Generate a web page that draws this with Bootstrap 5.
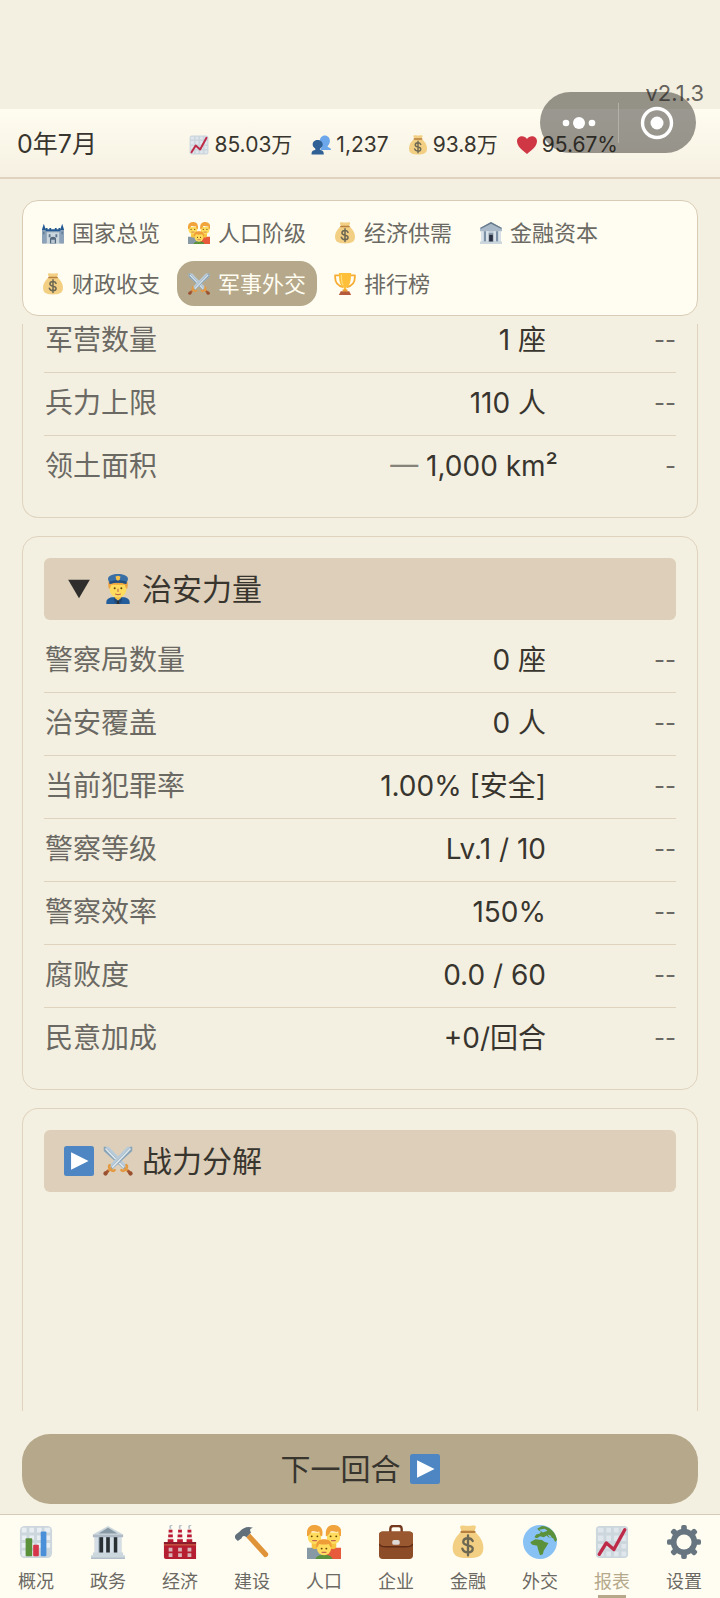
<!DOCTYPE html>
<html lang="zh-CN">
<head>
<meta charset="utf-8">
<meta name="viewport" content="width=device-width, initial-scale=1">
<title>军事外交 - 报表</title>
<link href="https://cdn.jsdelivr.net/npm/bootstrap@5.3.0/dist/css/bootstrap.min.css" rel="stylesheet">
<style>
:root { --paper:#f4f0e1; --cream:#fffdf1; --line:#dfd3bf; --tan:#b5a88b; --sand:#ddcfb9; --ink:#38352f; --dim:#6b6963; }
body { background:var(--paper); color:var(--ink); font-family:Inter,"Noto Sans CJK SC",sans-serif; }
.app { min-height:100vh; }
.ico { flex:none; display:block; }
.status-space { height:109px; }
.version { top:80px; right:16px; font-size:22px; line-height:26px; color:#66635d; }
.capsule { top:92px; right:24px; width:156px; height:61px; border-radius:31px; background:rgba(30,28,26,.45); z-index:3; }
.capsule button { background:none; border:0; padding:0; flex:1; display:flex; align-items:center; justify-content:center; }
.capsule .split { width:1px; height:40px; background:#b3b0aa; }
.topbar { height:70px; padding:3px 102px 0 17px; background:linear-gradient(#fffdf0,#f5f0e2); border-bottom:2px solid var(--line); }
.date { font-size:25px; }
.stats { gap:19px; font-size:21px; }
.stats .ico { width:20px; height:20px; margin-right:5px; }
.main-area { padding:0 22px; }
.tabs { margin-top:21px; padding:9px 8px; border:1px solid #d8ccb7; border-radius:16px; background:var(--cream); gap:6px; }
.tab { height:45px; padding:0 11px; gap:8px; border:0; border-radius:17px; background:none; color:var(--dim); font-size:22px; line-height:32px; }
.tab .ico { width:22px; height:22px; }
.tab.active { background:var(--tan); color:var(--cream); }
.scroll { flex:1 1 0; margin-top:8px; overflow:hidden; gap:18px; }
.panel { padding:21px 21px 19px; border:1px solid var(--line); border-radius:16px; }
.panel.cut-top { border-top:0; border-radius:0 0 16px 16px; padding-top:0; }
.panel.cut-bottom { border-bottom:0; border-radius:16px 16px 0 0; flex:1; }
.panel h2 { margin:0; }
.fold { width:100%; height:62px; padding:0 20px; gap:9px; border:0; border-radius:6px; background:var(--sand); color:var(--ink); font-size:30px; line-height:40px; }
.fold .ico { width:30px; height:30px; }
.data { width:100%; margin:0; table-layout:fixed; font-size:28px; line-height:40px; }
.fold-gap { margin-top:9px; }
.data th, .data td { height:63px; padding:0 0 1px; border-bottom:1px solid var(--line); font-weight:400; vertical-align:middle; white-space:nowrap; }
.data tr:last-child > * { border-bottom:0; }
.data th { color:var(--dim); padding-left:1px; }
.data td { text-align:right; }
.data .delta { width:130px; color:var(--dim); font-size:24px; }
.data .dash { color:#85827a; }
.data.scrolled tr:first-child > * { height:48px; padding-bottom:15px; line-height:32px; }
.area-value { margin-right:-12px; }
.next { margin-top:23px; height:70px; border:0; border-radius:28px; background:var(--tan); color:var(--ink); font-size:30px; gap:9px; }
.next .ico { width:30px; height:30px; }
.bottom { margin-top:10px; height:84px; border-top:1px solid #d5cbb6; background:var(--cream); }
.bottom a { flex:1 1 0; padding-top:10px; color:var(--dim); font-size:18px; line-height:26px; text-decoration:none; position:relative; gap:10px; }
.bottom .ico { width:34px; height:34px; }
.bottom a.active { color:var(--tan); }
.bottom a.active::after { content:""; position:absolute; bottom:0; width:28px; height:3px; background:var(--tan); }
</style>
<script src="https://cdn.jsdelivr.net/npm/bootstrap@5.3.0/dist/js/bootstrap.bundle.min.js"></script>
</head>
<body>
<svg width="0" height="0" class="d-none" aria-hidden="true">
  <symbol id="i-chart" viewBox="0 0 36 36">
    <rect x="1" y="1" width="34" height="34" rx="4" fill="#ccd6dd"/>
    <g fill="#e1e8ed"><path d="M3 3h6v5H3zM12 3h5v5h-5zM20 3h5v5h-5zM28 3h5v5h-5zM3 11h6v6H3zM12 11h5v6h-5zM20 11h5v6h-5zM28 11h5v6h-5zM3 20h6v5H3zM12 20h5v5h-5zM20 20h5v5h-5zM28 20h5v5h-5zM3 28h6v5H3zM12 28h5v5h-5zM20 28h5v5h-5zM28 28h5v5h-5z" opacity=".9"/></g>
    <path d="M4.500 31 12 19l8 7L31.500 5" fill="none" stroke="#be2b48" stroke-width="3.600" stroke-linecap="round" stroke-linejoin="round"/>
  </symbol>
  <symbol id="i-bars" viewBox="0 0 36 36">
    <rect x="1" y="1" width="34" height="34" rx="5" fill="#ccd6dd"/>
    <path d="M3 3h5v5H3zM11 3h5v5h-5zM19 3h5v5h-5zM27 3h6v5h-6zM3 11h5v5H3zM11 11h5v5h-5zM19 11h5v5h-5zM27 11h6v5h-6zM3 19h5v5H3zM11 19h5v5h-5zM19 19h5v5h-5zM27 19h6v5h-6zM3 27h5v6H3zM11 27h5v6h-5z" fill="#e9eef3"/>
    <rect x="7" y="14" width="7" height="19" rx="1" fill="#5c913b"/><rect x="15" y="21" width="6" height="12" rx="1" fill="#d7354a"/><rect x="23" y="7" width="6" height="26" rx="1" fill="#4a90d9"/>
  </symbol>
  <symbol id="i-people" viewBox="0 0 36 36">
    <path d="M17 27c0-3 2-5 3-6-3-3-4-5-4-10 0-6 4-10 9-10s9 4 9 10c0 4-2 7-4 9-1 3 6 2 6 7z" fill="#6ba7ea"/>
    <path d="M1 35c0-6 2-7 6-8 2-1 1-2 0-3-3-3-4-4-4-7 0-5 4-8 9-8s9 3 9 8c0 3-1 4-4 7-1 1-2 2 0 3 4 1 6 2 6 8z" fill="#2f6196"/>
  </symbol>
  <symbol id="i-money" viewBox="0 0 36 36">
    <path d="M11 7C3 14 1 21 2 27c1 6 6 8 16 8s15-2 16-8c1-6-1-13-9-20z" fill="#f2cf83"/>
    <path d="M10 1c3-1 4 0 8 0s6-1 8 0c1 2-1 5-2 6H12c-1-1-3-4-2-6z" fill="#f2cf83"/>
    <rect x="10" y="6" width="16" height="2.500" rx="1.200" fill="#b8803f"/>
    <path d="M23 17c-1-2-3-3-5-3-3 0-5 1-5 4 0 5 10 2 10 7 0 3-2 4-5 4s-5-1-6-4M18 11v21" fill="none" stroke="#6d6853" stroke-width="2.500" stroke-linecap="round"/>
  </symbol>
  <symbol id="i-heart" viewBox="0 0 36 36"><path d="M18 34C8 27 0 20 0 11 0 1 13-1 18 7c5-8 18-6 18 4 0 9-8 16-18 23z" fill="#cf3745"/></symbol>
  <symbol id="i-castle" viewBox="0 0 36 36">
    <path d="M1 14h34v21H1z" fill="#9aaebe"/><path d="M8 17h20v18H8z" fill="#ccd6dd"/>
    <path d="M0 35V11h7v24zM29 35V11h7v24z" fill="#8ba2b8"/>
    <path d="M0 13 1 9l2-6 2 6 1 4zM30 13l1-4 2-6 2 6 1 4zM6 15v-5h3v2h3v-2h3v2h6v-2h3v2h3v-2h3v5z" fill="#245a91"/>
    <path d="M11 20h3v5h-3zM22 20h3v5h-3zM2 16h2v4H2zM32 16h2v4h-2z" fill="#5c7690"/>
    <path d="M13 35v-7c0-5 10-5 10 0v7z" fill="#53687c"/><path d="M15 35v-6h6v6z" fill="#b9c7d2"/>
  </symbol>
  <symbol id="i-family" viewBox="0 0 36 36">
    <path d="M0 36V24h12c3 1 4 3 4 5v7z" fill="#8899a6"/><path d="M36 36V24H24c-3 1-4 3-4 5v7z" fill="#e75a3b"/>
    <path d="M9 36c1-6 17-6 18 0z" fill="#5c913b"/>
    <path d="M5 17h7v7c-2 2-5 2-7 0zM24 17h7v7c-2 2-5 2-7 0z" fill="#f6c43f"/>
    <path d="M1 8h14v6c0 3-3 6-7 6s-7-3-7-6zM21 8h14v6c0 3-3 6-7 6s-7-3-7-6z" fill="#ffdc5d"/>
    <path d="M0 12C-1 3 3 0 8 0s10 3 8 12l-2-1-1-4c-3 1-6-1-8 0-1 2-2 3-3 4zM20 12c-1-9 3-12 8-12s10 3 8 12l-2-1-1-4c-3 1-6-1-8 0-1 2-2 3-3 4z" fill="#f0a43b"/>
    <circle cx="18" cy="24.500" r="7.500" fill="#ffdc5d"/><path d="M10 24c-1-7 3-9 8-9s9 2 8 9c-2-1-2-3-3-4-3 1-7 1-10 0-1 1-1 3-3 4z" fill="#ef9d37"/>
    <g fill="#664500"><circle cx="5" cy="12" r="1"/><circle cx="11" cy="12" r="1"/><circle cx="25" cy="12" r="1"/><circle cx="31" cy="12" r="1"/><circle cx="15.500" cy="25" r="1"/><circle cx="20.500" cy="25" r="1"/></g>
    <path d="M6 16.500h4M26 16.500h4M16 29h4" stroke="#c1694f" stroke-width="1.200" stroke-linecap="round"/>
  </symbol>
  <symbol id="i-bank" viewBox="0 0 36 36">
    <path d="M2 10 18 1l16 9z" fill="#ccd6dd"/><path d="M8 9 18 3l10 6z" fill="#8899a6"/><path d="M2 10h32v3H2z" fill="#aebbc6"/>
    <path d="M4 13h28v17H4z" fill="#8899a6"/>
    <path d="M9 13h4v17H9zM16 13h4v17h-4zM24 13h4v17h-4z" fill="#292f33"/>
    <path d="M4 13h4v17H4zM13 13h3v17h-3zM20 13h4v17h-4zM28 13h4v17h-4z" fill="#d5dee6"/>
    <path d="M2 29h32v3h2v4H0v-4h2z" fill="#ccd6dd"/><path d="M0 34.500h36V36H0z" fill="#b2bfca"/>
  </symbol>
  <symbol id="i-museum" viewBox="0 0 36 36">
    <path d="M0 10 18 0l18 10v5H0z" fill="#a9b9c8"/><path d="M0 10 18 0l18 10-2 1L18 3 2 11z" fill="#677b8d"/>
    <path d="M2 15h32v18H2z" fill="#b9c7d4"/><path d="M6 15h4v17H6zM26 15h4v17h-4z" fill="#7d91a6"/><path d="M13 18h10v15H13z" fill="#8899a6"/><path d="M15 21h6v12h-6z" fill="#292f43"/>
    <path d="M2 15h4v17H2zM10 15h4v17h-4zM22 15h4v17h-4zM30 15h4v17h-4z" fill="#dae3ea"/><path d="M0 32h36v4H0z" fill="#ccd6dd"/>
  </symbol>
  <symbol id="i-swords" viewBox="0 0 36 36">
    <g id="sword"><path d="M1 1h6l22 23-4 4L1 6z" fill="#b9cbd8"/><path d="M1 1h2l24 25-2 2L1 6z" fill="#8aa3b5"/><path d="M3 3l22 23" stroke="#dde7ee" stroke-width="2"/>
    <path d="M22 29c2 2 4 0 5-1s3-3 1-5M27 27l6 6" fill="none" stroke="#e39a43" stroke-width="3" stroke-linecap="round"/><path d="M29.500 29.500l3 3" stroke="#a95836" stroke-width="3.500"/><circle cx="33" cy="33" r="2.600" fill="#99502f"/></g>
    <use href="#sword" transform="matrix(-1 0 0 1 36 0)"/>
  </symbol>
  <symbol id="i-trophy" viewBox="0 0 36 36">
    <path d="M10 4H2c-1 10 3 17 13 19M26 4h8c1 10-3 17-13 19" fill="none" stroke="#f5ad35" stroke-width="3"/>
    <path d="M8 0h20c0 13-2 22-8 24v7h-4v-7C10 22 8 13 8 0z" fill="#ffbf38"/><path d="M12 3c0 9 1 14 3 17" fill="none" stroke="#ffdc7b" stroke-width="2"/>
    <path d="M11 30h14l3 6H8z" fill="#b65a3c"/><path d="M14 27h8v3h-8z" fill="#e89c32"/>
  </symbol>
  <symbol id="i-police" viewBox="0 0 36 36">
    <path d="M4 36v-2c0-4 4-6 8-6h12c4 0 8 2 8 6v2z" fill="#245d9c"/><path d="M14 24h8v5l-4 3-4-3z" fill="#f5c04b"/>
    <path d="M13 28l5 4-4 3zM23 28l-5 4 4 3z" fill="#1e4777"/><path d="M17 32h2l1 4h-4z" fill="#292f33"/>
    <path d="M8 11h20v7c0 6-4 10-10 10S8 24 8 18z" fill="#ffdc5d"/><path d="M7 18c-1-5-1-7 0-9h22c1 2 1 4 0 9-2-1-2-3-3-5H10c-1 2-1 4-3 5z" fill="#efa43e"/>
    <path d="M6 6c0-4 6-6 12-6s12 2 12 6c0 2-2 4-2 6-6-2-14-2-20 0 0-2-2-4-2-6z" fill="#3a6fa5"/><path d="M8 9c6-2 14-2 20 0v3c-6-2-14-2-20 0z" fill="#24507f"/><path d="M18 2l3 1-1 4-2 1-2-1-1-4z" fill="#f5c04b"/>
    <circle cx="14" cy="17" r="1.200" fill="#664500"/><circle cx="22" cy="17" r="1.200" fill="#664500"/><path d="M15 24c2 1 4 1 6 0M18 18v3" fill="none" stroke="#c1694f" stroke-width="1.300" stroke-linecap="round"/>
  </symbol>
  <symbol id="i-play" viewBox="0 0 36 36"><rect width="36" height="36" rx="3" fill="#4d86c2"/><path d="M8.500 7.500v21L29.500 18z" fill="#fff"/></symbol>
  <symbol id="i-down" viewBox="0 0 36 36"><path d="M5 7h26L18 29z" fill="#2f2e2c"/></symbol>
  <symbol id="i-factory" viewBox="0 0 36 36">
    <path d="M6 4h4l1 15H5zM16 4h4l1 15h-6zM26 4h4l1 15h-6z" fill="#ece9e6"/><path d="M6 5h4v3H6zM5.600 10h4.800v3H5.500zM5 15h6v3H5zM16 5h4v3h-4zM15.600 10h4.800v3h-5zM15 15h6v3h-6zM26 5h4v3h-4zM25.600 10h4.800v3h-5zM25 15h6v3h-6z" fill="#be1931"/>
    <path d="M8 4c-1-3 0-4 2-4M18 4c-1-3 0-4 2-4M28 4c-1-3 0-4 2-4" fill="none" stroke="#b8c2ca" stroke-width="1.800"/>
    <path d="M1 18h34v18H3a2 2 0 0 1-2-2z" fill="#b51f31"/><path d="M1 18h34v3H1z" fill="#8c1c29"/><path d="M1 21h34" stroke="#db6a48"/>
    <path d="M6 24h4v4H6zM16 24h4v4h-4zM26 24h4v4h-4zM6 30h4v4H6zM16 30h4v4h-4zM26 30h4v4h-4z" fill="#d8b3b7"/>
  </symbol>
  <symbol id="i-hammer" viewBox="0 0 36 36">
    <path d="M12 13l4-4 19 21c1 2-2 5-4 4z" fill="#e0943a"/>
    <path d="M19 3C14 1 9 2 5 7l-4 3c-2 2-1 4 0 5l2 2 4-3c1-3 3-3 5-1l5-5c-2-3-1-4 2-5z" fill="#62707c"/>
  </symbol>
  <symbol id="i-case" viewBox="0 0 36 36">
    <path d="M12 8V4c0-2 1-3 3-3h6c2 0 3 1 3 3v4" fill="none" stroke="#74391e" stroke-width="2.500"/>
    <rect y="7" width="36" height="29" rx="4" fill="#8c4c27"/><path d="M0 20c2 3 4 3 8 3h20c4 0 6 0 8-3v-9a4 4 0 0 0-4-4H4a4 4 0 0 0-4 4z" fill="#9a5831"/><path d="M0 20c2 3 4 3 8 3h20c4 0 6 0 8-3" fill="none" stroke="#5f2b14" stroke-width="1.500"/><rect x="14" y="16" width="8" height="5" rx="2" fill="#ded8d5"/>
  </symbol>
  <symbol id="i-globe" viewBox="0 0 36 36">
    <circle cx="18" cy="18" r="18" fill="#88c1f4"/>
    <path d="M15 4l5-3c8 0 15 7 16 15l-2 2-2-4-5-1-2-2-3 2-4-1-3 2-3-1 2-3 4-1 1-2-2-1zM8 18l5-3 7 1 3 2 4 1-3 5-2 3-1 4-3 1-2-6-1-4-5-1-2-2z" fill="#5c913b"/><path d="M17 5l6-1 3 2-5 2zM26 10l3 1 2 3-3-1z" fill="#88c1f4"/>
  </symbol>
  <symbol id="i-gear" viewBox="0 0 36 36">
    <g fill="#66757f"><g id="teeth"><rect x="15" width="6" height="36" rx="2"/><rect y="15" width="36" height="6" rx="2"/></g><use href="#teeth" transform="rotate(45 18 18)"/></g>
    <circle cx="18" cy="18" r="11" fill="none" stroke="#66757f" stroke-width="6"/><circle cx="18" cy="18" r="8" fill="#fffdf1"/>
  </symbol>
</svg>

<div class="app d-flex flex-column position-relative">
  <div class="status-space"></div>
  <div class="version position-absolute">v2.1.3</div>
  <div class="capsule position-absolute d-flex align-items-center">
    <button type="button" aria-label="更多"><svg width="34" height="14" viewBox="0 0 34 14" fill="#fff"><circle cx="4" cy="7" r="3.300"/><circle cx="17" cy="7" r="6"/><circle cx="30" cy="7" r="3.300"/></svg></button>
    <span class="split"></span>
    <button type="button" aria-label="关闭"><svg width="34" height="34" viewBox="0 0 34 34"><circle cx="17" cy="17" r="14.500" fill="none" stroke="#fff" stroke-width="3.400"/><circle cx="17" cy="17" r="6.500" fill="#fff"/></svg></button>
  </div>

  <header class="topbar d-flex align-items-center justify-content-between">
    <div class="date">0年7月</div>
    <div class="stats d-flex align-items-center">
      <span class="d-flex align-items-center"><svg class="ico"><use href="#i-chart"/></svg>85.03万</span>
      <span class="d-flex align-items-center"><svg class="ico"><use href="#i-people"/></svg>1,237</span>
      <span class="d-flex align-items-center"><svg class="ico"><use href="#i-money"/></svg>93.8万</span>
      <span class="d-flex align-items-center"><svg class="ico"><use href="#i-heart"/></svg>95.67%</span>
    </div>
  </header>

  <main class="main-area flex-grow-1 d-flex flex-column">
    <div class="tabs d-flex flex-wrap">
      <button type="button" class="tab d-flex align-items-center"><svg class="ico"><use href="#i-castle"/></svg>国家总览</button>
      <button type="button" class="tab d-flex align-items-center"><svg class="ico"><use href="#i-family"/></svg>人口阶级</button>
      <button type="button" class="tab d-flex align-items-center"><svg class="ico"><use href="#i-money"/></svg>经济供需</button>
      <button type="button" class="tab d-flex align-items-center"><svg class="ico"><use href="#i-museum"/></svg>金融资本</button>
      <button type="button" class="tab d-flex align-items-center"><svg class="ico"><use href="#i-money"/></svg>财政收支</button>
      <button type="button" class="tab active d-flex align-items-center"><svg class="ico"><use href="#i-swords"/></svg>军事外交</button>
      <button type="button" class="tab d-flex align-items-center"><svg class="ico"><use href="#i-trophy"/></svg>排行榜</button>
    </div>

    <div class="scroll d-flex flex-column">
      <section class="panel cut-top">
        <table class="data scrolled">
          <tr><th scope="row">军营数量</th><td>1 座</td><td class="delta">--</td></tr>
          <tr><th scope="row">兵力上限</th><td>110 人</td><td class="delta">--</td></tr>
          <tr><th scope="row">领土面积</th><td><span class="area-value"><span class="dash">—</span> 1,000 km²</span></td><td class="delta">-</td></tr>
        </table>
      </section>

      <section class="panel">
        <h2><button type="button" class="fold d-flex align-items-center" aria-expanded="true"><svg class="ico"><use href="#i-down"/></svg><svg class="ico"><use href="#i-police"/></svg>治安力量</button></h2>
        <table class="data fold-gap">
          <tr><th scope="row">警察局数量</th><td>0 座</td><td class="delta">--</td></tr>
          <tr><th scope="row">治安覆盖</th><td>0 人</td><td class="delta">--</td></tr>
          <tr><th scope="row">当前犯罪率</th><td>1.00% [安全]</td><td class="delta">--</td></tr>
          <tr><th scope="row">警察等级</th><td>Lv.1 / 10</td><td class="delta">--</td></tr>
          <tr><th scope="row">警察效率</th><td>150%</td><td class="delta">--</td></tr>
          <tr><th scope="row">腐败度</th><td>0.0 / 60</td><td class="delta">--</td></tr>
          <tr><th scope="row">民意加成</th><td>+0/回合</td><td class="delta">--</td></tr>
        </table>
      </section>

      <section class="panel cut-bottom">
        <h2><button type="button" class="fold d-flex align-items-center" aria-expanded="false"><svg class="ico"><use href="#i-play"/></svg><svg class="ico"><use href="#i-swords"/></svg>战力分解</button></h2>
      </section>
    </div>

    <button type="button" class="next d-flex align-items-center justify-content-center">下一回合<svg class="ico"><use href="#i-play"/></svg></button>
  </main>

  <nav class="bottom d-flex">
    <a href="#" class="d-flex flex-column align-items-center"><svg class="ico"><use href="#i-bars"/></svg>概况</a>
    <a href="#" class="d-flex flex-column align-items-center"><svg class="ico"><use href="#i-bank"/></svg>政务</a>
    <a href="#" class="d-flex flex-column align-items-center"><svg class="ico"><use href="#i-factory"/></svg>经济</a>
    <a href="#" class="d-flex flex-column align-items-center"><svg class="ico"><use href="#i-hammer"/></svg>建设</a>
    <a href="#" class="d-flex flex-column align-items-center"><svg class="ico"><use href="#i-family"/></svg>人口</a>
    <a href="#" class="d-flex flex-column align-items-center"><svg class="ico"><use href="#i-case"/></svg>企业</a>
    <a href="#" class="d-flex flex-column align-items-center"><svg class="ico"><use href="#i-money"/></svg>金融</a>
    <a href="#" class="d-flex flex-column align-items-center"><svg class="ico"><use href="#i-globe"/></svg>外交</a>
    <a href="#" class="active d-flex flex-column align-items-center" aria-current="page"><svg class="ico"><use href="#i-chart"/></svg>报表</a>
    <a href="#" class="d-flex flex-column align-items-center"><svg class="ico"><use href="#i-gear"/></svg>设置</a>
  </nav>
</div>
</body>
</html>
